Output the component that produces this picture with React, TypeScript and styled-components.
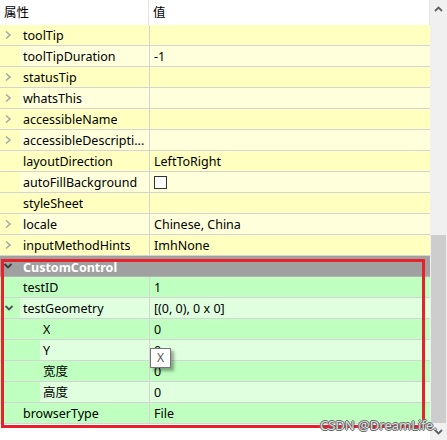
import styled, { createGlobalStyle } from "styled-components";

type Tone = "yellow" | "green";

type Prop = {
  name: string;
  value?: string;
  depth: number;
  expander?: "closed" | "open";
  checkbox?: boolean;
  tone: Tone;
};

const palette = {
  yellow: { dark: "#ffffbf", light: "#ffffdc" },
  green: { dark: "#bfffbf", light: "#dfffdf" },
};

const props: Prop[] = [
  { name: "toolTip", depth: 1, expander: "closed", tone: "yellow" },
  { name: "toolTipDuration", value: "-1", depth: 1, tone: "yellow" },
  { name: "statusTip", depth: 1, expander: "closed", tone: "yellow" },
  { name: "whatsThis", depth: 1, expander: "closed", tone: "yellow" },
  { name: "accessibleName", depth: 1, expander: "closed", tone: "yellow" },
  { name: "accessibleDescripti...", depth: 1, expander: "closed", tone: "yellow" },
  { name: "layoutDirection", value: "LeftToRight", depth: 1, tone: "yellow" },
  { name: "autoFillBackground", depth: 1, checkbox: true, tone: "yellow" },
  { name: "styleSheet", depth: 1, tone: "yellow" },
  { name: "locale", value: "Chinese, China", depth: 1, expander: "closed", tone: "yellow" },
  { name: "inputMethodHints", value: "ImhNone", depth: 1, expander: "closed", tone: "yellow" },
];

const customProps: Prop[] = [
  { name: "testID", value: "1", depth: 1, tone: "green" },
  { name: "testGeometry", value: "[(0, 0), 0 x 0]", depth: 1, expander: "open", tone: "green" },
  { name: "X", value: "0", depth: 2, tone: "green" },
  { name: "Y", value: "0", depth: 2, tone: "green" },
  { name: "宽度", value: "0", depth: 2, tone: "green" },
  { name: "高度", value: "0", depth: 2, tone: "green" },
  { name: "browserType", value: "File", depth: 1, tone: "green" },
];

const GlobalStyle = createGlobalStyle`
  html, body {
    margin: 0;
    padding: 0;
    background: #ffffff;
  }
  body {
    font-family: "Noto Sans", "Noto Sans CJK SC", sans-serif;
    font-size: 12.5px;
    color: #000000;
  }
`;

const ChevronRight = () => (
  <svg width="8" height="10" viewBox="0 0 8 10">
    <polyline points="2,1.5 6,5 2,8.5" fill="none" stroke="#a8a8a8" strokeWidth="1.6" />
  </svg>
);

const ChevronDown = ({ color }: { color: string }) => (
  <svg width="10" height="8" viewBox="0 0 10 8">
    <polyline points="1.5,2 5,5.5 8.5,2" fill="none" stroke={color} strokeWidth="1.8" />
  </svg>
);

const PropertyRow = ({ prop, index }: { prop: Prop; index: number }) => {
  const colors = palette[prop.tone];
  const rowColor = index % 2 === 0 ? colors.dark : colors.light;
  return (
    <Row style={{ background: rowColor }}>
      <NameCell>
        <Indent depth={prop.depth} color={colors.dark}>
          {prop.expander === "closed" && <ChevronRight />}
          {prop.expander === "open" && <ChevronDown color="#505050" />}
        </Indent>
        <NameText>{prop.name}</NameText>
      </NameCell>
      <ValueCell>
        {prop.checkbox ? <CheckBox /> : prop.value}
      </ValueCell>
    </Row>
  );
};

const App = () => {
  return (
    <>
      <GlobalStyle />
      <Window>
        <Browser>
          <Header>
            <HeaderName>属性</HeaderName>
            <HeaderValue>值</HeaderValue>
          </Header>
          {props.map((p, i) => (
            <PropertyRow key={p.name} prop={p} index={i} />
          ))}
          <GroupRow>
            <GroupIndent>
              <ChevronDown color="#3a3a3a" />
            </GroupIndent>
            <GroupTitle>CustomControl</GroupTitle>
          </GroupRow>
          {customProps.map((p, i) => (
            <PropertyRow key={p.name} prop={p} index={i} />
          ))}
          <Highlight />
          <Tooltip>X</Tooltip>
        </Browser>
        <ScrollBar>
          <ScrollArrow>
            <svg width="9" height="6" viewBox="0 0 9 6">
              <polyline points="1,5 4.5,1.5 8,5" fill="none" stroke="#606060" strokeWidth="1.8" />
            </svg>
          </ScrollArrow>
          <Track>
            <Thumb />
          </Track>
          <ScrollArrow>
            <svg width="9" height="6" viewBox="0 0 9 6">
              <polyline points="1,1 4.5,4.5 8,1" fill="none" stroke="#606060" strokeWidth="1.8" />
            </svg>
          </ScrollArrow>
        </ScrollBar>
        <Watermark>CSDN @DreamLife.</Watermark>
      </Window>
    </>
  );
};

const Window = styled.div`
  position: relative;
  display: flex;
  width: 447px;
  height: 440px;
  overflow: hidden;
  background: #ffffff;
`;

const Browser = styled.div`
  position: relative;
  width: 430px;
  display: flex;
  flex-direction: column;
`;

const Header = styled.div`
  display: flex;
  height: 25px;
  background: #ffffff;
  border-right: 1px solid #e5e5e5;
  box-sizing: border-box;
`;

const HeaderName = styled.div`
  width: 149px;
  padding-left: 4px;
  box-sizing: border-box;
  border-right: 1px solid #e5e5e5;
  line-height: 25px;
`;

const HeaderValue = styled.div`
  flex: 1;
  padding-left: 4px;
  line-height: 25px;
`;

const Row = styled.div`
  display: flex;
  height: 21px;
  border-bottom: 1px solid #d4d4d4;
  box-sizing: border-box;
`;

const NameCell = styled.div`
  display: flex;
  width: 150px;
  border-right: 1px solid #d4d4d4;
  box-sizing: border-box;
`;

const Indent = styled.div<{ depth: number; color: string }>`
  width: ${(p) => p.depth * 20}px;
  flex-shrink: 0;
  background: ${(p) => p.color};
  display: flex;
  align-items: center;
  padding-left: 4px;
  box-sizing: border-box;
`;

const NameText = styled.div`
  padding-left: 3px;
  height: 20px;
  line-height: 22px;
  white-space: nowrap;
  overflow: hidden;
`;

const ValueCell = styled.div`
  flex: 1;
  padding-left: 4px;
  height: 20px;
  line-height: 22px;
  display: flex;
  align-items: flex-start;
  white-space: nowrap;
  overflow: hidden;
`;

const CheckBox = styled.div`
  width: 13px;
  height: 13px;
  margin-top: 4px;
  border: 1px solid #333333;
  background: #ffffff;
  box-sizing: border-box;
`;

const GroupRow = styled.div`
  display: flex;
  height: 21px;
  background: #a0a0a0;
  border-bottom: 1px solid #b4b4b4;
  box-sizing: border-box;
`;

const GroupIndent = styled.div`
  width: 20px;
  display: flex;
  align-items: center;
  padding-left: 3px;
  box-sizing: border-box;
`;

const GroupTitle = styled.div`
  padding-left: 3px;
  height: 20px;
  line-height: 23px;
  font-weight: 700;
  color: #ffffff;
`;

const Highlight = styled.div`
  position: absolute;
  left: 1px;
  top: 259px;
  width: 424px;
  height: 169px;
  border: 3px solid #e8202a;
  box-sizing: border-box;
  pointer-events: none;
`;

const Tooltip = styled.div`
  position: absolute;
  left: 150px;
  top: 348px;
  width: 21px;
  height: 20px;
  background: #ffffff;
  border: 1px solid #767676;
  box-sizing: border-box;
  box-shadow: 3px 3px 3px rgba(0, 0, 0, 0.35);
  color: #575757;
  font-size: 12px;
  line-height: 18px;
  text-align: center;
`;

const ScrollBar = styled.div`
  width: 17px;
  display: flex;
  flex-direction: column;
  background: #f0f0f0;
`;

const ScrollArrow = styled.div`
  height: 17px;
  display: flex;
  align-items: center;
  justify-content: center;
`;

const Track = styled.div`
  flex: 1;
  display: flex;
  flex-direction: column;
  justify-content: flex-end;
`;

const Thumb = styled.div`
  height: 188px;
  margin: 0 1px;
  background: #cdcdcd;
`;

const Watermark = styled.div`
  position: absolute;
  left: 320px;
  top: 416px;
  font-size: 13px;
  color: #dcdcdc;
  text-shadow: 1px 0 0 #6a6a6a, -1px 0 0 #6a6a6a, 0 1px 0 #6a6a6a, 0 -1px 0 #6a6a6a;
  white-space: nowrap;
  pointer-events: none;
`;

export default App;
